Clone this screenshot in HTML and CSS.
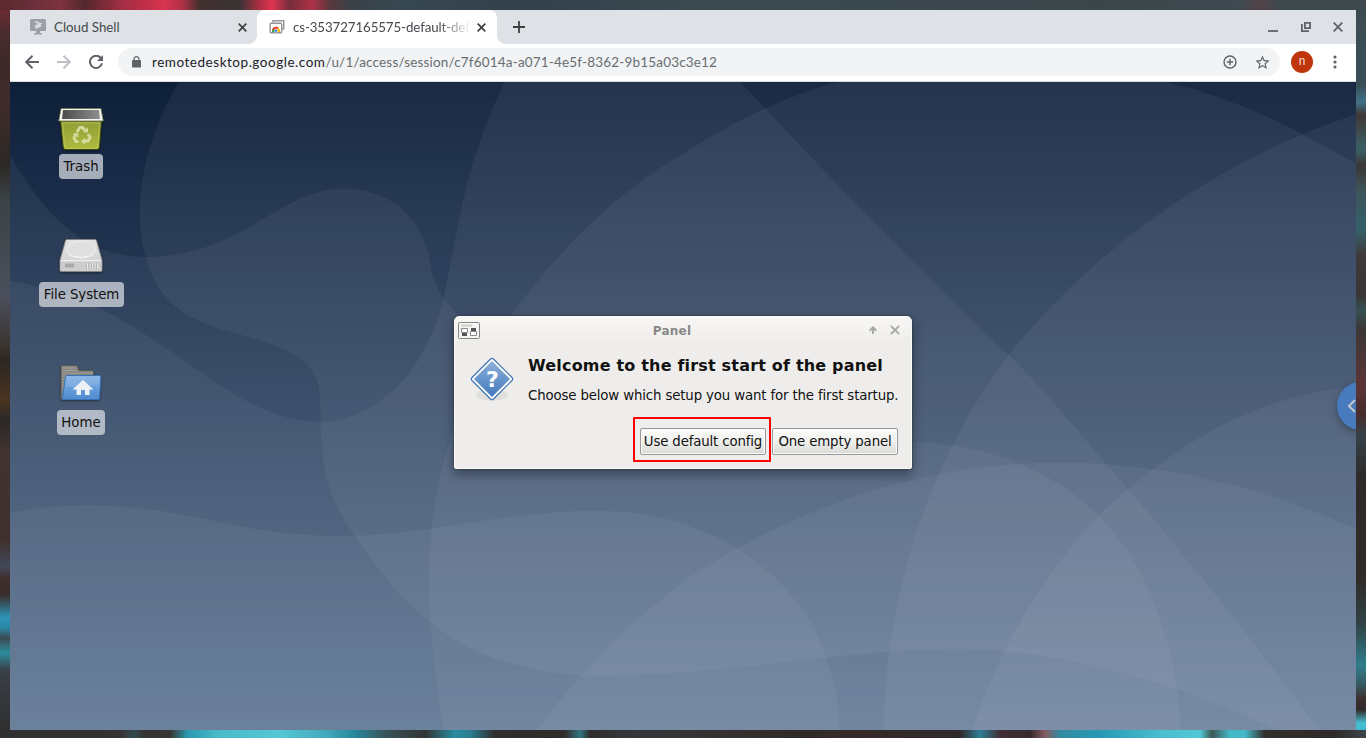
FILE: index.html
```html
<!DOCTYPE html>
<html lang="en">
<head>
<meta charset="utf-8">
<title>Chrome Remote Desktop</title>
<link rel="stylesheet" href="styles.css">
</head>
<body>
<div class="edge edge-top"></div>
<div class="edge edge-left"></div>
<div class="edge edge-right"></div>
<div class="edge edge-bottom"></div>
<main class="browser">
  <header class="tabs">
    <div class="tab">
      <svg class="favicon" width="16" height="16" viewBox="0 0 16 16"><path d="M1.500 0h13q1.500 0 1.500 1.500v9q0 1.500-1.500 1.500h-13Q0 12 0 10.500v-9Q0 0 1.500 0zM6 12h4v2H6z" fill="#9aa0a6"/><path d="M4 14h8v1.500H4z" fill="#9aa0a6"/><path d="M5 2.500l5.500 2.300L5 7.500M5.500 9.300l5.500-2.800" fill="none" stroke="#e1e4e8" stroke-width="1.500"/></svg>
      <span class="tab-title">Cloud Shell</span>
      <svg class="close" width="9" height="9" viewBox="0 0 9 9"><path d="M.700.700l7.600 7.600M8.300.700L.700 8.300"/></svg>
    </div>
    <div class="tab active">
      <svg class="favicon" width="16" height="16" viewBox="0 0 16 16"><path d="M4 3.500V1.800h10.700v8H13" fill="none" stroke="#909498" stroke-width="1.400"/><rect x="1.200" y="4.200" width="11.500" height="9.500" rx="1" fill="#fff" stroke="#909498" stroke-width="1.400"/><path d="M3.200 12.500a4 4 0 0 1 7-3.500l-3 1.500z" fill="#e94335"/><path d="M3 13V11l2-.5L6.500 13z" fill="#34a853"/><path d="M8 9.500h2.300q1 1.500.900 3.500H8z" fill="#fbbc05"/><circle cx="7.100" cy="11.700" r="1.600" fill="#4285f4" stroke="#fff" stroke-width=".5"/></svg>
      <span class="tab-title long">cs-353727165575-default-def</span>
      <svg class="close" width="9" height="9" viewBox="0 0 9 9"><path d="M.700.700l7.600 7.600M8.300.700L.700 8.300"/></svg>
    </div>
    <svg class="newtab" width="12" height="12" viewBox="0 0 12 12"><path d="M6 0v12M0 6h12" stroke="#3c4043" stroke-width="1.800"/></svg>
    <div class="winctl">
      <svg width="10" height="10" viewBox="0 0 10 10"><path d="M0 9h10"/></svg>
      <svg width="10" height="10" viewBox="0 0 10 10"><path d="M3.900.900h5.200v5.200H3.900zM.900 2v7.100H8"/></svg>
      <svg width="10" height="10" viewBox="0 0 10 10"><path d="M.700.700l8.600 8.600M9.300.700L.700 9.300"/></svg>
    </div>
  </header>
  <nav class="toolbar">
    <svg class="nav-ic" width="14" height="14" viewBox="0 0 14 14"><path d="M14 7H1.500M7.500.800L1.200 7l6.300 6.200"/></svg>
    <svg class="nav-ic off" width="14" height="14" viewBox="0 0 14 14"><path d="M0 7h12.500M6.500.800L12.800 7l-6.300 6.200"/></svg>
    <svg class="nav-ic" width="14" height="14" viewBox="0 0 14 14"><path d="M11.800 3A6.100 6.100 0 1 0 13 8.300"/><path d="M14 0v6H8z" fill="#5f6368" stroke="none"/></svg>
    <div class="omnibox">
      <svg class="lock" width="9" height="12" viewBox="0 0 9 12"><rect y="4" width="9" height="7.500" rx="1" fill="#5f6368"/><path d="M2 5V3.200a2.500 2.500 0 0 1 5 0V5" fill="none" stroke="#5f6368" stroke-width="1.200"/></svg>
      <span class="url"><span class="host">remotedesktop.google.com</span><span class="path">/u/1/access/session/c7f6014a-a071-4e5f-8362-9b15a03c3e12</span></span>
      <svg class="plus" width="14" height="14" viewBox="0 0 14 14"><circle cx="7" cy="7" r="6"/><path d="M7 3.800v6.400M3.800 7h6.400"/></svg>
      <svg class="star" viewBox="0 0 24 24"><path d="M22 9.240l-7.190-.620L12 2 9.190 8.630 2 9.240l5.460 4.730L5.820 21 12 17.270 18.180 21l-1.630-7.030L22 9.240zM12 15.400l-3.760 2.270 1-4.280-3.320-2.880 4.380-.380L12 6.100l1.710 4.040 4.380.380-3.320 2.880 1 4.280L12 15.400z" fill="#5f6368"/></svg>
    </div>
    <span class="avatar">n</span>
    <svg class="dots" width="4" height="14" viewBox="0 0 4 14"><g fill="#5f6368"><circle cx="2" cy="2" r="1.600"/><circle cx="2" cy="7" r="1.600"/><circle cx="2" cy="12" r="1.600"/></g></svg>
  </nav>
  <section class="desktop">
    <svg class="wallpaper" width="1346" height="648" viewBox="0 0 1346 648">
      <defs><linearGradient id="sky" x1="0" y1="0" x2="0" y2="1"><stop offset="0" stop-color="#0e1f3a"/><stop offset="1" stop-color="#56708d"/></linearGradient></defs>
      <rect width="1346" height="648" fill="url(#sky)"/>
      <g transform="translate(-10 -2) scale(.43559 .41454)" fill="#d6e1f0" fill-opacity=".06">
        <path d="M412 0C330 150 300 310 335 427C360 530 420 575 520 605C660 645 732 670 735 770C738 880 730 980 815 1100C920 1260 1050 1440 1400 1438C1700 1430 1950 1375 2168 1373C2400 1370 2650 1430 2930 1568L3200 1568V0Z"/>
        <path d="M0 140C100 330 190 425 335 427C560 425 640 262 790 262C900 262 980 340 990 460C1020 590 1200 760 2095 872C2400 885 2600 1060 2668 1320C2700 1420 2710 1500 2710 1580L0 1580Z"/>
        <path d="M0 480C180 510 260 560 400 660C520 750 620 825 735 825C850 825 970 720 1015 540C1050 380 1060 220 1160 0L1696 0Q1880 210 2088 430T2318 665T2588 985T3036 1580L0 1580Z"/>
        <path d="M1020 1580C985 1350 960 1100 1030 880C1060 760 1110 660 1175 565C1290 400 1430 260 1568 178C1700 90 1820 30 1945 0L2660 0C2800 35 2900 80 2998 135L3136 215V1580Z"/>
        <path d="M3136 75C2850 170 2550 360 2318 660C2130 920 2030 1250 2028 1580L3136 1580Z"/>
        <path d="M3136 738C2900 750 2700 870 2513 1060C2400 1190 2290 1370 2228 1580L3136 1580Z"/>
        <path d="M1225 1580C1340 1410 1450 1310 1568 1210C1820 1030 2120 923 2430 923C2700 923 2950 1000 3136 1095V1580Z"/>
        <path d="M0 1050C180 1005 350 1030 520 1070C700 1110 850 1105 1000 1080C1200 1050 1400 1010 1568 1070C1790 1150 1925 1330 1928 1580L0 1580Z"/>
      </g>
    </svg>
    <div class="icons">
      <div class="icon">
        <svg width="48" height="48" viewBox="0 0 48 48">
          <defs>
            <linearGradient id="bin" x1="0" y1="0" x2="0" y2="1"><stop offset="0" stop-color="#8f9d38"/><stop offset="1" stop-color="#b0bb3c"/></linearGradient>
            <linearGradient id="hollow" x1="0" y1="0" x2="1" y2="0"><stop offset="0" stop-color="#4c4c4c"/><stop offset="1" stop-color="#8e8e8e"/></linearGradient>
          </defs>
          <path d="M3.500 16h41l-2 26q-.5 2.500-2.500 2.500H8.500q-2 0-2.300-2.500z" fill="url(#bin)" stroke="#3d4a10"/>
          <path d="M5.500 18h37l-1.600 23.500q-.2 1.800-1.800 1.800H9.500q-1.600 0-1.800-1.800z" fill="none" stroke="#bcc75c" stroke-width=".8"/>
          <path d="M4 3.500h40l2.300 12.500H1.700z" fill="#f4f4f4" stroke="#6d7740" stroke-width=".8"/>
          <path d="M6 5h36l1 9H5z" fill="url(#hollow)"/>
          <g fill="none" stroke="#d2da9a" stroke-width="3"><path d="M20 27l3-4.500h2.500l3 3.500M31 29l2 3.500-2 3.500h-4M21.500 36.500H19l-2-3.500 2-4"/></g>
          <path d="M26 27.500h5v-5.500zM28 32.500v7.500l-4-3.700zM15.500 29l5.500-1.500.5 5z" fill="#d2da9a"/>
        </svg>
        <span>Trash</span>
      </div>
      <div class="icon">
        <svg width="48" height="48" viewBox="0 0 48 48">
          <defs><linearGradient id="disk" x1="0" y1="0" x2="0" y2="1"><stop offset="0" stop-color="#e2e2e2"/><stop offset="1" stop-color="#cfcfcf"/></linearGradient></defs>
          <path d="M10 6.500h28q1 0 1.500 1L45 27v10.500q0 1-1.500 1h-39q-1.500 0-1.500-1V27L8.500 7.500q.3-1 1.500-1z" fill="url(#disk)" stroke="#858585"/>
          <path d="M3.500 28h41v9.500h-41z" fill="#cdcdcd"/><path d="M4 27.700h40" stroke="#f7f7f7"/><ellipse cx="24" cy="16.500" rx="14.500" ry="8.500" fill="#dfdfdf" stroke="#eee"/><path d="M11 21c4 4 22 4 26 0" fill="none" stroke="#f4f4f4"/>
          <path d="M8 30.500h9v4H8z" fill="#a9a9a9"/><path d="M30.500 30v6M33 30v6M35.500 30v6M38 30v6M40.500 30v6" stroke="#eee"/><path d="M29.500 30v6M32 30v6M34.500 30v6M37 30v6M39.500 30v6" stroke="#aaa" stroke-width=".8"/>
        </svg>
        <span>File System</span>
      </div>
      <div class="icon">
        <svg width="48" height="48" viewBox="0 0 48 48">
          <defs><linearGradient id="fold" x1="0" y1="0" x2="0" y2="1"><stop offset="0" stop-color="#82b1e6"/><stop offset="1" stop-color="#4f8cd0"/></linearGradient></defs>
          <path d="M4 38.500V5.500q0-1 1-1h14q1 0 1.500 1l1.500 4H35.500q1 0 1 1V38.500z" fill="#85857f" stroke="#5a5b57"/>
          <path d="M5 7h14M5 9.500h15M5 12h31M5 15h31M5 18h5M5 21h5M5 24h4M5 27h4M5 30h3" stroke="#aaa9a3" stroke-width=".8"/>
          <path d="M10 14.500h33q1 0 .9 1L42.500 37.500q0 1-1 1H6.500q-1.300 0-1-1.500l3-21.500q.2-1 1.500-1z" fill="url(#fold)" stroke="#3a74b6"/><path d="M10 15.500h32.500l-.5 8C31 26 19 26 8.500 26z" fill="#fff" opacity=".1"/>
          <path d="M26 19l10.500 9.500h-4V34h-4.500v-5h-4v5h-4.500v-5.500h-4z" fill="#edf1f7"/>
        </svg>
        <span>Home</span>
      </div>
    </div>
    <div class="side-tab"><svg width="10" height="14" viewBox="0 0 10 14"><path d="M8 1L2 7l6 6" fill="none" stroke="#c4c8cc" stroke-width="2"/></svg></div>
    <section class="dialog">
      <div class="titlebar">
        <svg width="22" height="17" viewBox="0 0 22 17"><rect x=".5" y=".5" width="21" height="16" rx="1" fill="#f4f4f3" stroke="#858583"/><path d="M3 3.500h11" stroke="#cfcfcc" stroke-width="2"/><path d="M3.500 6.500h6v4h-6z" fill="#fff" stroke="#888"/><path d="M4 11h5v3H4z" fill="#555"/><path d="M13 6h5v3h-5z" fill="#555"/><path d="M12.500 9.500h6v4h-6z" fill="#fff" stroke="#888"/></svg>
        <span class="caption">Panel</span>
        <svg class="up" width="8" height="8" viewBox="0 0 8 8"><path d="M4 8V1.500M.700 4.700L4 1.300l3.300 3.400"/></svg>
        <svg class="x" width="10" height="10" viewBox="0 0 10 10"><path d="M.900.900l8.200 8.200M9.100.900L.900 9.100"/></svg>
      </div>
      <div class="content">
        <svg class="question" width="44" height="46" viewBox="0 0 44 46">
          <defs><linearGradient id="ask" x1="0" y1="0" x2="0" y2="1"><stop offset="0" stop-color="#8db0da"/><stop offset="1" stop-color="#4379bd"/></linearGradient></defs>
          <ellipse cx="22" cy="38" rx="16" ry="6" fill="#000" opacity=".06"/>
          <path d="M20.500 2Q22 .700 23.500 2L42 20.500q1.300 1.500 0 3L23.500 42q-1.500 1.300-3 0L2 23.500q-1.300-1.500 0-3z" fill="#fff" stroke="#3d72b2" stroke-width="1.200"/>
          <path d="M22 4l18 18-18 18L4 22z" fill="url(#ask)"/>
          <text x="22.500" y="30" text-anchor="middle" class="qmark">?</text>
        </svg>
        <div class="message">
          <h1>Welcome to the first start of the panel</h1>
          <p>Choose below which setup you want for the first startup.</p>
        </div>
      </div>
      <div class="actions">
        <div class="mark"><button>Use default config</button></div>
        <button>One empty panel</button>
      </div>
    </section>
  </section>
</main>
</body>
</html>
```
FILE: styles.css
```css
* { box-sizing: border-box; }
body { margin: 0; width: 1366px; height: 738px; overflow: hidden; background: #2f2b2a; display: grid; grid-template: 10px 720px 8px / 10px 1346px 10px; }
svg { display: block; flex: none; }
.edge-top { grid-area: 1 / 1 / 2 / 4; background: linear-gradient(90deg, #5b292e 0, #68303a 30px, #7d3340 60px, #54282e 85px, #a82f46 125px, #b82e45 140px, #d93450 165px, #b13046 182px, #42302f 200px, #3a3434 240px, #a52e42 258px, #e03350 272px, #742e3b 290px, #ae3247 312px, #5a383e 330px, #3a4147 350px, #374851 400px, #34404a 520px, #3b4951 700px, #3b464b 1100px, #3e4a50 1240px, #534348 1260px, #3d494d 1280px, #3d494e 1366px); }
.edge-left { grid-area: 2 / 1; background: linear-gradient(#6b2b33 0, #472c2d 25px, #3c2928 60px, #402c2b 90px, #2c2825 155px, #3b4446 190px, #40474c 225px, #4b4f5d 285px, #3b3431 335px, #2c2623 350px, #4a3420 390px, #2b2726 410px, #413331 440px, #402f2d 530px, #41495b 557px, #402d2c 568px, #392e2d 585px, #2e96bb 608px, #2b84a3 618px, #3b4b50 628px, #2d8da0 643px, #3a4047 660px, #34383c 685px, #303031 720px); }
.edge-right { grid-area: 2 / 3; background: linear-gradient(#3c4c51 0, #394e58 75px, #417188 92px, #403836 105px, #3b6067 140px, #3b3736 155px, #3d5358 180px, #35616b 220px, #3f3939 245px, #393534 285px, #365052 300px, #3d3636 320px, #5c3536 375px, #482c2d 405px, #354047 425px, #2d2a28 470px, #302b28 570px, #304447 615px, #307d8b 655px, #355d65 673px, #3c2d2d 690px, #312c2b 700px, #48bed2 713px, #3fbad1 720px); }
.edge-bottom { grid-area: 3 / 1 / 4 / 4; background: linear-gradient(90deg, #2f3030 0, #363132 120px, #324b50 134px, #373231 145px, #383433 170px, #2a9bb1 188px, #4cbbc9 220px, #54c6d4 280px, #43aabd 325px, #26869a 355px, #39545b 385px, #333435 425px, #2a8ba0 455px, #2b7d90 470px, #302d2c 495px, #302c2a 565px, #31767f 580px, #312d2b 590px, #33373c 630px, #363130 720px, #2f2928 800px, #362a29 850px, #30292a 960px, #2e7d96 980px, #402f34 1000px, #36292b 1030px, #855c61 1045px, #338ba1 1060px, #2799b4 1100px, #4abdcf 1160px, #52c8d7 1200px, #3e5754 1212px, #43b9c8 1230px, #46b7c6 1245px, #332f2d 1265px, #2f2a29 1335px, #3d4549 1366px); }
.browser { grid-area: 2 / 2; display: flex; flex-direction: column; overflow: hidden; font-family: Lato, "Open Sans", sans-serif; }

.tabs { height: 34px; background: #dee1e6; display: flex; align-items: center; }
.tab { height: 34px; width: 247px; display: flex; align-items: center; padding: 0 10px 0 20px; }
.tab.active { width: 240px; background: #fff; border-radius: 8px 8px 0 0; padding: 0 11px 0 12px; position: relative; }
.tab.active::before, .tab.active::after { content: ""; position: absolute; bottom: 0; width: 8px; height: 8px; }
.tab.active::before { left: -8px; background: radial-gradient(circle at 0 0, transparent 7.5px, #fff 8px); }
.tab.active::after { right: -8px; background: radial-gradient(circle at 100% 0, transparent 7.5px, #fff 8px); }
.tab-title { flex: 1; margin-left: 8px; font-size: 13.3px; line-height: 18px; color: #45494d; white-space: nowrap; }
.tab-title.long { mask-image: linear-gradient(90deg, #000 145px, transparent 178px); letter-spacing: -.1px; }
.close { fill: none; stroke: #3c4043; stroke-width: 1.7; }
.newtab { margin-left: 16px; }
.winctl { margin-left: auto; margin-right: 13px; display: flex; gap: 22px; }
.winctl svg { fill: none; stroke: #5f6368; stroke-width: 1.8; }
.winctl svg:first-child { margin-right: 1px; }

.toolbar { height: 38px; background: #fff; border-bottom: 1px solid #dadce0; display: flex; align-items: center; padding: 0 20px 1px 15px; }
.nav-ic { fill: none; stroke: #5f6368; stroke-width: 2; margin-right: 18px; }
.nav-ic.off { stroke: #bdc1c6; }
.nav-ic:nth-of-type(3) { margin-right: 15px; }
.omnibox { width: 1162px; height: 28px; border-radius: 14px; background: #f1f3f4; display: flex; align-items: center; padding: 0 11px 0 14px; }
.url { flex: 1; margin-left: 11px; font-size: 13.5px; line-height: 20px; white-space: nowrap; }
.host { color: #202124; letter-spacing: .53px; }
.path { color: #686d71; letter-spacing: .18px; }
.plus { fill: none; stroke: #5f6368; stroke-width: 1.4; margin-right: 17px; }
.star { width: 17px; height: 17px; margin-right: -2px; }
.avatar { margin-left: 11px; width: 22px; height: 22px; border-radius: 50%; background: #bf360c; color: #f5ddd5; font: 12px/21px Roboto, sans-serif; text-align: center; }
.dots { margin-left: auto; margin-right: -1px; }

.desktop { flex: 1; position: relative; overflow: hidden; font: 13.333px "DejaVu Sans", sans-serif; color: #111; }
.wallpaper { position: absolute; inset: 0; }
.icons { position: relative; width: 142px; padding-top: 23px; display: flex; flex-direction: column; gap: 54px; }
.icon { display: flex; flex-direction: column; align-items: center; height: 74px; }
.icon svg { margin-bottom: 1px; filter: drop-shadow(0 1px 1px rgba(0, 0, 0, .45)); }
.icon span { height: 25px; line-height: 25px; padding: 0 4.5px; border-radius: 4px; background: rgba(211, 215, 224, .76); white-space: nowrap; }
.icon:nth-child(2) span { margin-left: 1px; letter-spacing: -.07px; padding: 0 5px; }
.side-tab { position: absolute; left: 1327px; top: 300px; width: 48px; height: 48px; border-radius: 50%; background: #477bbd; box-shadow: 0 3px 8px rgba(0, 0, 0, .3); padding: 17px 0 0 10px; }

.dialog { position: absolute; left: 444px; top: 234px; width: 458px; height: 153px; background: #eeedeb; border-radius: 5px 5px 2px 2px; border: 1px solid #f9f9f8; box-shadow: 0 0 0 1px rgba(40, 50, 60, .35), 0 5px 12px rgba(0, 0, 0, .4); display: flex; flex-direction: column; }
.titlebar { height: 26px; padding: 1px 11px 0 3px; display: flex; align-items: center; background: linear-gradient(#f8f7f5, #eeedeb); border-radius: 4px 4px 0 0; }
.caption { flex: 1; text-align: center; font-weight: bold; font-size: 12px; letter-spacing: .25px; color: #898886; padding-right: 5px; }
.up, .x { fill: none; stroke: #aaa9a7; stroke-width: 2; margin-top: -1px; }
.x { margin-left: 13px; }
.content { display: flex; padding: 14px 0 0 15px; height: 76px; }
.message { margin: -1px 0 0 14px; white-space: nowrap; }
h1 { margin: 0; font-size: 16px; line-height: 20px; font-weight: bold; letter-spacing: .185px; }
p { margin: 10px 0 0; line-height: 20px; letter-spacing: -.145px; }
.qmark { font: bold 22px "DejaVu Sans", sans-serif; fill: #fff; }
.actions { display: flex; justify-content: flex-end; padding-right: 13px; }
button { height: 27px; width: 126px; margin: 9px 0 0; padding: 0; border: 1px solid #989896; border-radius: 2px; background: linear-gradient(#fbfbfa, #f1f1ef 45%, #d9d9d6); box-shadow: inset 0 0 0 1px #fafafa; font: inherit; color: #111; letter-spacing: -.15px; white-space: nowrap; }
.mark { width: 138px; height: 45px; margin: -2px 1px 0 0; border: 2px solid #f00; border-radius: 1px; padding-left: 5px; }
```
